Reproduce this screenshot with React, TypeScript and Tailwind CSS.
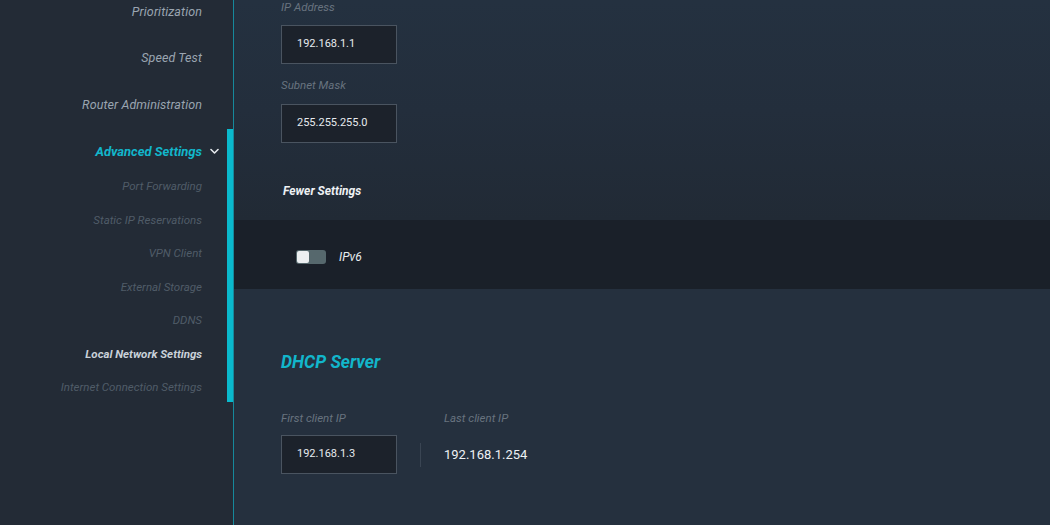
import React from "react";

const font = { fontFamily: "Roboto, 'Liberation Sans', sans-serif" };

function MainItem({ label }: { label: string }) {
  return (
    <div className="h-[46.5px] flex items-center justify-end">
      <span className="italic text-[12.5px] text-[#9aa5b1] tracking-[0.1px]">{label}</span>
    </div>
  );
}

function SubItem({ label, active }: { label: string; active?: boolean }) {
  return (
    <div className="h-[33.5px] flex items-center justify-end">
      <span
        className={
          active
            ? "italic font-bold text-[11.5px] text-[#c9d1d9]"
            : "italic text-[11.5px] text-[#505c68]"
        }
      >
        {label}
      </span>
    </div>
  );
}

function Field({ value }: { value: string }) {
  return (
    <div className="w-[116px] h-[39px] bg-[#1c222b] border border-[#4a5460] flex items-center pl-[15px]">
      <span className="text-[11px] text-[#e6eaee]">{value}</span>
    </div>
  );
}

export default function App() {
  return (
    <div className="w-[1050px] h-[525px] overflow-hidden flex bg-[#24303d]" style={font}>
      {/* Sidebar */}
      <div className="w-[234px] shrink-0 bg-[#232b36] border-r border-[#16899c] pr-[31px] relative">
        <div className="mt-[-11px]">
          <MainItem label="Prioritization" />
          <MainItem label="Speed Test" />
          <MainItem label="Router Administration" />
          <div className="relative">
            <div className="absolute right-[-31px] top-0 bottom-[3px] w-[6px] bg-[#0ab9cd]" />
            <div className="h-[46.5px] flex items-center justify-end relative">
              <span className="italic font-bold text-[13px] text-[#12b6cb]">Advanced Settings</span>
              <svg
                className="absolute right-[-17px] top-[19px]"
                width="9"
                height="7"
                viewBox="0 0 9 7"
                fill="none"
              >
                <path d="M1 1.5L4.5 5L8 1.5" stroke="#e5e9ed" strokeWidth="1.6" strokeLinecap="round" strokeLinejoin="round" />
              </svg>
            </div>
            <div className="mt-[-5px]">
              <SubItem label="Port Forwarding" />
              <SubItem label="Static IP Reservations" />
              <SubItem label="VPN Client" />
              <SubItem label="External Storage" />
              <SubItem label="DDNS" />
              <SubItem label="Local Network Settings" active />
              <SubItem label="Internet Connection Settings" />
            </div>
          </div>
        </div>
      </div>

      {/* Content */}
      <div className="flex-1 flex flex-col">
        <div className="h-[220px] bg-gradient-to-b from-[#243140] via-[#232e3c] to-[#212a35] pl-[47px] flex flex-col">
          <div className="h-[14px] mt-[1px] flex items-center italic text-[11.5px] text-[#68737f]">IP Address</div>
          <div className="mt-[10px]">
            <Field value="192.168.1.1" />
          </div>
          <div className="mt-[15px] h-[14px] flex items-center italic text-[11.5px] text-[#68737f]">Subnet Mask</div>
          <div className="mt-[11px]">
            <Field value="255.255.255.0" />
          </div>
          <div className="mt-[40px] h-[16px] flex items-center pl-[2px] italic font-bold text-[12px] text-[#eef1f4]">
            Fewer Settings
          </div>
        </div>

        <div className="h-[69px] bg-[#1a2029] flex items-center pl-[62px] pt-[4px]">
          <div className="w-[30px] h-[14px] rounded-[3px] bg-[#56686d] flex items-center pl-[1px]">
            <div className="w-[12px] h-[12px] rounded-[2px] bg-[#eceff1]" />
          </div>
          <span className="ml-[13px] italic text-[12px] text-[#e8ecef]">IPv6</span>
        </div>

        <div className="flex-1 bg-[#25303e] pl-[47px] flex flex-col">
          <div className="mt-[61px] h-[24px] flex items-center italic font-bold text-[17.5px] text-[#12b6cb]">
            DHCP Server
          </div>
          <div className="mt-[38px] flex">
            <div className="flex flex-col">
              <div className="h-[14px] flex items-center italic text-[11.5px] text-[#68737f]">First client IP</div>
              <div className="mt-[9px]">
                <Field value="192.168.1.3" />
              </div>
            </div>
            <div className="self-end mb-[7px] ml-[23px] w-px h-[24px] bg-[#3a4553]" />
            <div className="ml-[23px] flex flex-col">
              <div className="h-[14px] flex items-center italic text-[11.5px] text-[#68737f]">Last client IP</div>
              <div className="mt-[9px] h-[39px] flex items-center text-[13px] text-[#eef1f4]">192.168.1.254</div>
            </div>
          </div>
        </div>
      </div>
    </div>
  );
}
